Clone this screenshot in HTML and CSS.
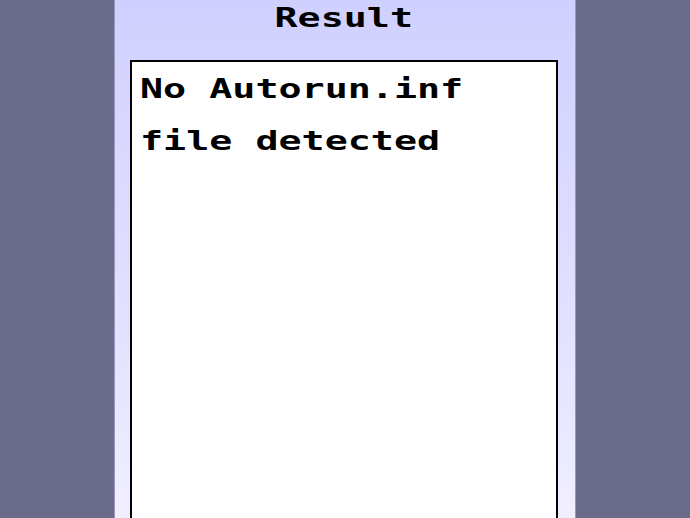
FILE: index.html
```html
<!DOCTYPE html>
<html lang="en">
<head>
    <meta charset="UTF-8">
    <title>Result</title>
    <link rel="stylesheet" href="styles.css">
</head>
<body>
    <div class="panel">
        <h2 class="title"><span class="wide">Result</span></h2>
        <div class="result-box">
            <p class="result-text"><span class="wide">No Autorun.inf<br>file detected</span></p>
        </div>
    </div>
</body>
</html>
```

FILE: styles.css
```css
html, body { height: 100%; }
body { margin: 0; background: #6b6b8b; font-family: 'DejaVu Sans Mono', 'Liberation Mono', monospace; color: #000; overflow: hidden; }
.panel { width: 460px; margin: 0 auto; min-height: 100%; box-sizing: border-box; padding: 0 17px 0 15px; background: linear-gradient(to bottom, #d0d0ff 0%, #e4e2ff 60%, #f4f2ff 100%); box-shadow: -1px 0 0 #9a98c0, 1px 0 0 #9a98c0; }
.wide { display: inline-block; transform: scaleX(1.42); }
.title { margin: 0 0 24px; font-size: 27px; font-weight: bold; line-height: 36px; text-align: center; }
.title .wide { transform-origin: center; }
.result-box { background: #fff; border: 2px solid #000; min-height: 500px; padding: 1px 8px 0; }
.result-text { margin: 0; font-size: 27px; font-weight: bold; line-height: 52px; }
.result-text .wide { transform-origin: left; }
```
